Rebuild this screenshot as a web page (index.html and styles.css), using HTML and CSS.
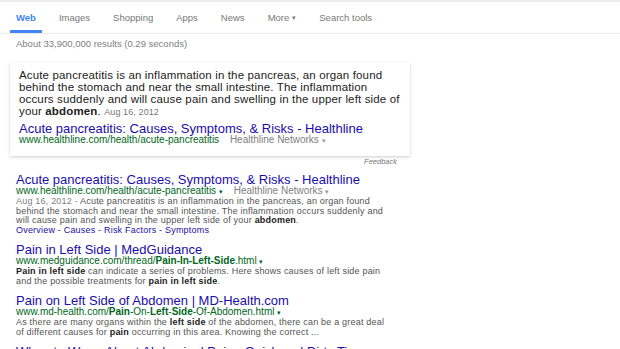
FILE: index.html
```html
<!DOCTYPE html>
<html lang="en">
<head>
    <meta charset="UTF-8">
    <title>left side abdomen pain - Search</title>
    <link rel="stylesheet" href="styles.css">
</head>
<body>
    <div class="topstrip"></div>

    <nav class="tabs">
        <a class="tab tab-active">Web</a>
        <a class="tab">Images</a>
        <a class="tab">Shopping</a>
        <a class="tab">Apps</a>
        <a class="tab">News</a>
        <a class="tab">More <span class="caret">&#9662;</span></a>
        <a class="tab">Search tools</a>
    </nav>

    <div class="stats">About 33,900,000 results (0.29 seconds)</div>

    <div class="answer-card">
        <p class="answer-text">Acute pancreatitis is an inflammation in the pancreas, an organ found<br>
            behind the stomach and near the small intestine. The inflammation<br>
            occurs suddenly and will cause pain and swelling in the upper left side of<br>
            your <b>abdomen</b>. <span class="answer-date">Aug 16, 2012</span></p>
        <a class="answer-title">Acute pancreatitis: Causes, Symptoms, &amp; Risks - Healthline</a>
        <div class="answer-url">www.healthline.com/health/acute-pancreatitis <span class="source">Healthline Networks <span class="caret-gray">&#9662;</span></span></div>
    </div>
    <div class="feedback">Feedback</div>

    <div class="results">
        <div class="result">
            <a class="result-title">Acute pancreatitis: Causes, Symptoms, &amp; Risks - Healthline</a>
            <div class="result-url">www.healthline.com/health/acute-pancreatitis <span class="caret-green">&#9662;</span> <span class="source">Healthline Networks <span class="caret-gray">&#9662;</span></span></div>
            <div class="snippet"><span class="date">Aug 16, 2012 - </span>Acute pancreatitis is an inflammation in the pancreas, an organ found behind the stomach and near the small intestine. The inflammation occurs suddenly and will cause pain and swelling in the upper left side of your <b>abdomen</b>.</div>
            <div class="sitelinks">Overview - Causes - Risk Factors - Symptoms</div>
        </div>

        <div class="result">
            <a class="result-title">Pain in Left Side | MedGuidance</a>
            <div class="result-url">www.medguidance.com/thread/<b>Pain-In-Left-Side</b>.html <span class="caret-green">&#9662;</span></div>
            <div class="snippet"><b>Pain in left side</b> can indicate a series of problems. Here shows causes of left side pain and the possible treatments for <b>pain in left side</b>.</div>
        </div>

        <div class="result">
            <a class="result-title">Pain on Left Side of Abdomen | MD-Health.com</a>
            <div class="result-url">www.md-health.com/<b>Pain</b>-On-<b>Left</b>-<b>Side</b>-Of-Abdomen.html <span class="caret-green">&#9662;</span></div>
            <div class="snippet">As there are many organs within the <b>left side</b> of the abdomen, there can be a great deal of different causes for <b>pain</b> occurring in this area. Knowing the correct ...</div>
        </div>

        <div class="result">
            <a class="result-title">When to Worry About Abdominal Pain - Quick and Dirty Tips</a>
        </div>
    </div>
</body>
</html>
```

FILE: styles.css
```css
body {
    margin: 0;
    font-family: "Liberation Sans", Arial, sans-serif;
    background: #fff;
    color: #222;
}

.topstrip {
    height: 2px;
    background: #ebebeb;
}

.tabs {
    display: flex;
    height: 31px;
    padding-left: 10px;
    border-bottom: 1px solid #ebebeb;
}

.tab {
    display: flex;
    align-items: center;
    padding: 3px 6px 0;
    margin-right: 11px;
    font-size: 9.5px;
    color: #777;
    border-bottom: 3px solid transparent;
}

.tab-active {
    color: #4285f4;
    font-weight: bold;
    border-bottom-color: #4285f4;
}

.caret {
    font-size: 7px;
    margin-left: 3px;
}

.stats {
    padding: 4px 0 0 16px;
    font-size: 9.5px;
    line-height: 12px;
    color: #808080;
}

/* answer box */
.answer-card {
    width: 382px;
    margin: 13px 0 0 10px;
    padding: 6px 9px 10px;
    box-shadow: 0 1px 3px rgba(0, 0, 0, 0.2);
}

.answer-text {
    margin: 0 0 5px;
    font-size: 11.5px;
    letter-spacing: 0.15px;
    line-height: 12px;
    white-space: nowrap;
    color: #222;
}

.answer-date {
    font-size: 9px;
    letter-spacing: 0.1px;
    color: #777;
}

.answer-title {
    display: block;
    font-size: 13px;
    line-height: 12px;
    color: #1a0dab;
}

.answer-url {
    font-size: 10px;
    line-height: 10px;
    color: #006621;
}

.source {
    margin-left: 8px;
    color: #808080;
}

.caret-gray {
    font-size: 7px;
    color: #999;
}

.caret-green {
    font-size: 7px;
    color: #006621;
}

.feedback {
    width: 397px;
    text-align: right;
    font-size: 7.5px;
    line-height: 9px;
    font-style: italic;
    color: #777;
    margin-top: 1px;
}

/* organic results */
.results {
    padding: 8px 0 0 16px;
    width: 375px;
}

.result {
    margin-bottom: 9px;
}

.result-title {
    display: block;
    font-size: 13px;
    line-height: 12px;
    color: #1a0dab;
}

.result-url {
    font-size: 10px;
    line-height: 10px;
    color: #006621;
}

.snippet {
    font-size: 9px;
    letter-spacing: 0.2px;
    line-height: 9.5px;
    color: #545454;
}

.snippet b {
    color: #222;
}

.date {
    color: #808080;
}

.sitelinks {
    font-size: 9px;
    letter-spacing: 0.2px;
    line-height: 9.5px;
    color: #1a0dab;
}
```
